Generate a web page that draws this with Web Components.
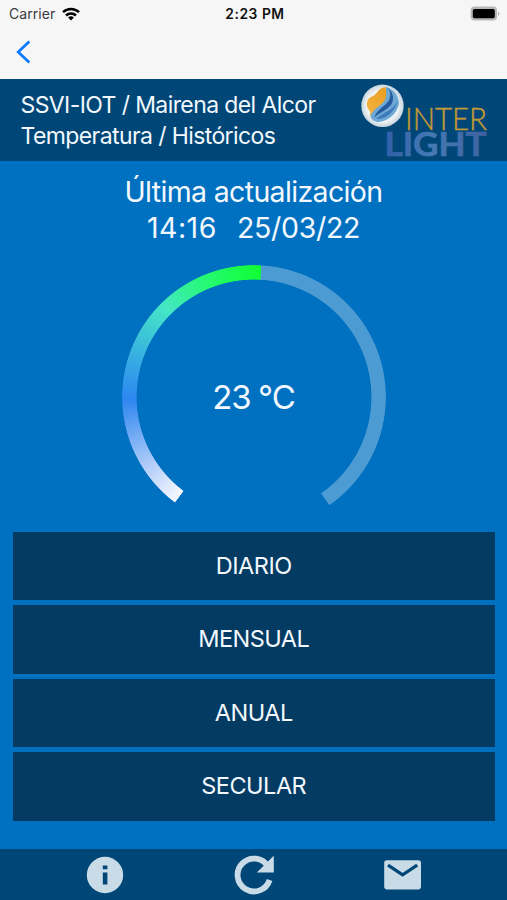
<!DOCTYPE html>
<html lang="es">
<head>
<meta charset="utf-8">
<title>SSVI-IOT</title>
<style>
  html, body {
    margin: 0;
    height: 100%;
  }
  body {
    font-family: Inter, "Liberation Sans", sans-serif;
    background: #0070c0;
    color: #f2f8fd;
    overflow: hidden;
  }
</style>
</head>
<body>

<app-screen>
  <status-bar slot="top" carrier="Carrier" time="2:23 PM"></status-bar>
  <nav-bar slot="top"></nav-bar>
  <title-bar slot="top">
    <span>SSVI-IOT / Mairena del Alcor</span>
    <span slot="second">Temperatura / Históricos</span>
    <brand-logo slot="logo"></brand-logo>
  </title-bar>

  <last-update time="14:16" date="25/03/22">Última actualización</last-update>
  <temp-gauge>23 °C</temp-gauge>
  <menu-list>
    <menu-button>DIARIO</menu-button>
    <menu-button>MENSUAL</menu-button>
    <menu-button>ANUAL</menu-button>
    <menu-button>SECULAR</menu-button>
  </menu-list>

  <tool-bar slot="bottom">
    <tool-icon name="info"></tool-icon>
    <tool-icon name="refresh"></tool-icon>
    <tool-icon name="mail"></tool-icon>
  </tool-bar>
</app-screen>

<script>
class BaseElement extends HTMLElement {
  connectedCallback() {
    this.attachShadow({ mode: "open" });
    this.shadowRoot.innerHTML = this.render();
  }
}

class AppScreen extends BaseElement {
  render() {
    return `
      <style>
        :host {
          display: flex;
          flex-direction: column;
          height: 900px;
        }
        main {
          flex: 1;
          display: flex;
          flex-direction: column;
        }
      </style>
      <slot name="top"></slot>
      <main><slot></slot></main>
      <slot name="bottom"></slot>
    `;
  }
}

class StatusBar extends BaseElement {
  render() {
    return `
      <style>
        :host {
          display: grid;
          grid-template-columns: 1fr auto 1fr;
          align-items: center;
          height: 27px;
          padding: 0 6px 0 9px;
          background: #f7f6f7;
          color: #3a3a3c;
          font-size: 14px;
        }
        .carrier {
          display: flex;
          align-items: center;
          gap: 6.5px;
          letter-spacing: .05px;
        }
        .time {
          color: #111;
          font-size: 13.8px;
          font-weight: 600;
          letter-spacing: .55px;
        }
        .battery {
          justify-self: end;
        }
        svg {
          display: block;
        }
      </style>
      <div class="carrier">
        <span>${this.getAttribute("carrier")}</span>
        <svg width="18" height="14" viewBox="0 0 18 14" fill="none" stroke="#000" stroke-width="2.5">
          <path d="M1 5.1a11.6 11.6 0 0 1 16 0"/>
          <path d="M4 8.5a7.3 7.3 0 0 1 10 0"/>
          <path d="M9 13.6l-2.9-3a4.2 4.2 0 0 1 5.8 0z" fill="#000" stroke="none"/>
        </svg>
      </div>
      <span class="time">${this.getAttribute("time")}</span>
      <svg class="battery" width="31" height="15" viewBox="0 0 31 15">
        <rect x=".6" y=".6" width="26.4" height="13.8" rx="4" fill="#b7b7b7"/>
        <path d="M28 5.2q2.6 2.4 0 4.8z" fill="#a8a8a8"/>
        <rect x="2.8" y="2.9" width="22" height="9.4" rx="1.8" fill="#000"/>
      </svg>
    `;
  }
}

class NavBar extends BaseElement {
  render() {
    return `
      <style>
        :host {
          display: flex;
          align-items: center;
          height: 52px;
          padding: 0 15px;
          box-sizing: border-box;
          background: #f7f6f7;
        }
        svg {
          margin-bottom: 2px;
        }
      </style>
      <svg width="16" height="26" viewBox="0 0 16 26" fill="none" stroke="#0a7aff" stroke-width="2.7">
        <path d="M14.3 2.5L3.2 13L14.3 23.5"/>
      </svg>
    `;
  }
}

class TitleBar extends BaseElement {
  render() {
    return `
      <style>
        :host {
          display: flex;
          justify-content: space-between;
          height: 82px;
          padding-left: 20.5px;
          box-sizing: border-box;
          background: #004778;
        }
        .lines {
          padding-top: 11px;
          font-size: 23px;
          line-height: 30.5px;
          letter-spacing: -.6px;
          white-space: nowrap;
        }
      </style>
      <div class="lines">
        <div><slot></slot></div>
        <div><slot name="second"></slot></div>
      </div>
      <slot name="logo"></slot>
    `;
  }
}

class BrandLogo extends BaseElement {
  render() {
    return `
      <style>
        :host {
          display: block;
          width: 157px;
          height: 82px;
        }
        text {
          font-family: Lato, sans-serif;
        }
      </style>
      <svg width="157" height="82" viewBox="0 0 157 82">
        <defs>
          <radialGradient id="ball">
            <stop offset=".75" stop-color="#eef2f4"/>
            <stop offset="1" stop-color="#c6d4de"/>
          </radialGradient>
          <linearGradient id="flame" x1="0" y1="1" x2="1" y2="0">
            <stop offset="0" stop-color="#f3b544"/>
            <stop offset="1" stop-color="#ea9d1c"/>
          </linearGradient>
          <linearGradient id="light" x1="0" x2="1">
            <stop offset="0" stop-color="#325ea8"/>
            <stop offset=".45" stop-color="#457ab5"/>
            <stop offset="1" stop-color="#3f61a0"/>
          </linearGradient>
        </defs>
        <circle cx="32.5" cy="26.8" r="21.2" fill="url(#ball)"/>
        <path d="M36 8C44 10 49 17 49 25C47 34 39 42 29 43C25 43 21 41 20 36C24 28 33 26 36 8Z" fill="#6ea9d6"/>
        <path d="M36.500 8C42 12 41 20 37 24C32 29 27 31 24 39C28 34 36 32 41 26C45 20 43 12 36.500 8Z" fill="#255a9f"/>
        <path d="M47.500 21C45 31 35 32 26 40C36 41 46 32 47.500 21Z" fill="#3f7cbc"/>
        <path d="M35.500 8C27 9 28 16 21 18C16 20 16 28 19 31C21 33 20 35 20.500 38C22 29 32 27 35 21C37 16 36 12 35.500 8Z" fill="url(#flame)"/>
        <text x="55" y="51" font-size="31" font-weight="300" fill="#c39a35" stroke="#c39a35" stroke-width=".4" textLength="82" lengthAdjust="spacingAndGlyphs">INTER</text>
        <text x="34.5" y="76.5" font-size="31.5" font-weight="700" fill="url(#light)" stroke="url(#light)" stroke-width=".6" textLength="102" lengthAdjust="spacingAndGlyphs">LIGHT</text>
      </svg>
    `;
  }
}

class LastUpdate extends BaseElement {
  render() {
    return `
      <style>
        :host {
          display: block;
          padding-top: 13px;
          text-align: center;
          font-size: 28.5px;
          line-height: 36px;
          letter-spacing: -.65px;
        }
        .when {
          display: flex;
          justify-content: center;
          gap: 20px;
          letter-spacing: -.3px;
        }
        .when :first-child {
          letter-spacing: .5px;
        }
      </style>
      <div><slot></slot></div>
      <div class="when">
        <span>${this.getAttribute("time")}</span>
        <span>${this.getAttribute("date")}</span>
      </div>
    `;
  }
}

class TempGauge extends BaseElement {
  render() {
    return `
      <style>
        :host {
          display: grid;
          place-items: center;
          width: 264px;
          height: 264px;
          margin: 19px auto 0;
          font-size: 33px;
          font-weight: 400;
          letter-spacing: -1px;
          word-spacing: -1px;
        }
        .ring, .value {
          grid-area: 1 / 1;
        }
        /* 288 degree ring, filled up to the current value */
        .ring {
          width: 264px;
          height: 264px;
          background: conic-gradient(from -143deg,
            #f6f8ff 0deg, #a9c8f8 22deg, #2d86f0 52deg, #38b4e0 74deg, #45e6c6 98deg,
            #26f976 119deg, #10ff33 146deg, #4d9bd3 146.3deg,
            #4d9bd3 288deg, transparent 288.3deg, transparent 359.7deg, #f6f8ff 360deg);
          -webkit-mask: radial-gradient(circle, transparent 117px, #000 117.8px, #000 131.4px, transparent 132.2px);
          mask: radial-gradient(circle, transparent 117px, #000 117.8px, #000 131.4px, transparent 132.2px);
        }
      </style>
      <div class="ring"></div>
      <span class="value"><slot></slot></span>
    `;
  }
}

class MenuList extends BaseElement {
  render() {
    return `
      <style>
        :host {
          display: grid;
          gap: 5.2px;
          padding: 3px 12.5px 0 13px;
        }
      </style>
      <slot></slot>
    `;
  }
}

class MenuButton extends BaseElement {
  render() {
    return `
      <style>
        :host {
          display: block;
        }
        button {
          all: unset;
          display: block;
          width: 100%;
          height: 68.3px;
          line-height: 68.4px;
          background: #033b63;
          text-align: center;
          font-size: 23.5px;
          letter-spacing: -.5px;
        }
      </style>
      <button><slot></slot></button>
    `;
  }
}

class ToolBar extends BaseElement {
  render() {
    return `
      <style>
        :host {
          display: grid;
          grid-template-columns: repeat(3, 149px);
          justify-content: center;
          justify-items: center;
          align-items: center;
          height: 51px;
          background: #004778;
        }
      </style>
      <slot></slot>
    `;
  }
}

const icons = {
  info: `
    <circle cx="20" cy="20" r="18.2"/>
    <path d="M17.8 10.6h4.6v3.7h-4.6zM17.8 17.6h4.6v11.8h-4.6z" fill="#004778"/>`,
  refresh: `
    <path d="M34 11.5A16.4 16.4 0 1 0 35.600 25" fill="none" stroke="#c9dbe7" stroke-width="5.8"/>
    <path d="M39.800 .8V17.600H22.800z"/>`,
  mail: `
    <rect x="1.2" y="5.2" width="36.8" height="29.2" rx="2.8"/>
    <path d="M5 10.2L19.6 19.8L34.2 10.2" fill="none" stroke="#004778" stroke-width="3.2"/>`
};

class ToolIcon extends BaseElement {
  render() {
    return `
      <style>
        :host {
          display: block;
        }
        svg {
          display: block;
        }
      </style>
      <svg width="40" height="40" viewBox="0 0 40 40" fill="#c9dbe7">
        ${icons[this.getAttribute("name")]}
      </svg>
    `;
  }
}

customElements.define("app-screen", AppScreen);
customElements.define("status-bar", StatusBar);
customElements.define("nav-bar", NavBar);
customElements.define("title-bar", TitleBar);
customElements.define("brand-logo", BrandLogo);
customElements.define("last-update", LastUpdate);
customElements.define("temp-gauge", TempGauge);
customElements.define("menu-list", MenuList);
customElements.define("menu-button", MenuButton);
customElements.define("tool-bar", ToolBar);
customElements.define("tool-icon", ToolIcon);
</script>
</body>
</html>
